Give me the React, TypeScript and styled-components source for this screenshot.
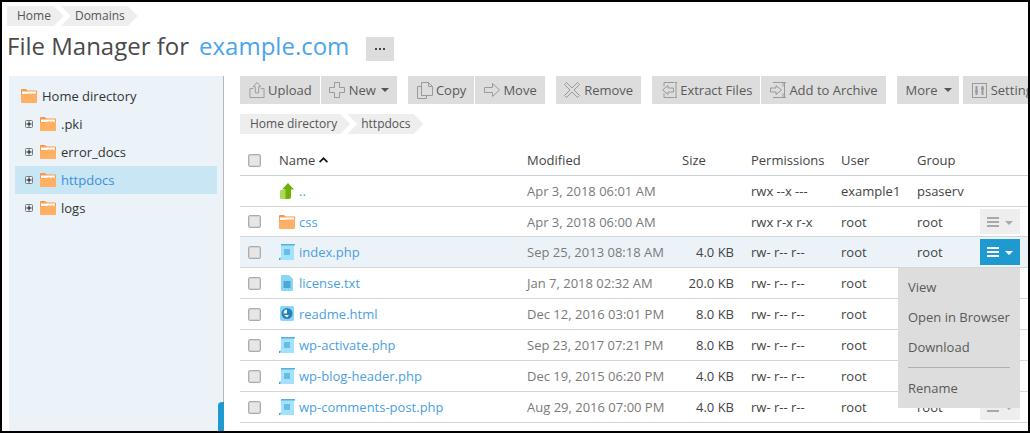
import React from "react";
import styled, { createGlobalStyle } from "styled-components";

const Global = createGlobalStyle`
  html, body { margin: 0; padding: 0; background: #fff; }
  body { font-family: "Open Sans", "Liberation Sans", sans-serif; font-size: 13px; color: #444; }
`;

const Page = styled.div`
  box-sizing: border-box;
  width: 1030px;
  height: 433px;
  border: 2px solid #000;
  background: #fff;
  overflow: hidden;
  display: flex;
  flex-direction: column;
`;

const Header = styled.header`
  padding: 4px 0 0 5px;
`;

const Crumbs = styled.nav`
  display: flex;
  height: 20px;
  font-size: 12px;
  line-height: 20px;
  color: #555;
`;

const Crumb = styled.span`
  padding: 0 13px 0 10px;
  background: #eee;
  clip-path: polygon(0 0, calc(100% - 10px) 0, 100% 50%, calc(100% - 10px) 100%, 0 100%);
  & + & {
    margin-left: -3px;
    padding-left: 14px;
    clip-path: polygon(0 0, calc(100% - 10px) 0, 100% 50%, calc(100% - 10px) 100%, 0 100%, 10px 50%);
  }
`;

const TitleRow = styled.div`
  display: flex;
  align-items: flex-start;
  height: 24px;
  margin-top: 11px;
`;

const Title = styled.h1`
  margin: 0;
  font-size: 24px;
  font-weight: 400;
  line-height: 18px;
  color: #4a4a4a;
`;

const Domain = styled.a`
  margin-left: 10px;
  font-size: 24px;
  line-height: 18px;
  color: #4ba5ea;
`;

const DotsButton = styled.button`
  width: 28px;
  height: 24px;
  margin-left: 17px;
  padding: 0;
  border: 0;
  background: #ddd;
  display: flex;
  align-items: center;
  justify-content: center;
`;

const Body = styled.div`
  flex: 1;
  min-height: 0;
  display: flex;
  margin: 15px 0 0 7px;
`;

const Sidebar = styled.aside`
  position: relative;
  box-sizing: border-box;
  width: 215px;
  flex: none;
  padding: 6px;
  background: #ebf3f9;
  border-right: 1px solid #b4b8bb;
`;

const SideHandle = styled.div`
  position: absolute;
  right: -1px;
  bottom: 0;
  width: 6px;
  height: 29px;
  background: #1f9ad0;
  border-top-left-radius: 4px;
`;

const TreeRoot = styled.div`
  display: flex;
  align-items: center;
  gap: 5px;
  height: 28px;
  padding-left: 6px;
  color: #333;
`;

const TreeRow = styled.div<{ $active?: boolean }>`
  display: flex;
  align-items: center;
  height: 28px;
  padding-left: 10px;
  background: ${(p) => (p.$active ? "#c8e6f4" : "transparent")};
  color: ${(p) => (p.$active ? "#3f8fd8" : "#333")};
`;

const TreeLabel = styled.span`
  margin-left: 5px;
`;

const Main = styled.main`
  flex: 1;
  min-width: 0;
  padding-left: 16px;
  overflow: hidden;
`;

const Toolbar = styled.div`
  display: flex;
  height: 28px;
  white-space: nowrap;
`;

const ToolGroup = styled.div`
  display: flex;
  flex: none;
  gap: 1px;
  margin-right: 11px;
  &:nth-last-child(2) { margin-right: 4px; }
`;

const ToolButton = styled.button`
  display: flex;
  align-items: center;
  gap: 3px;
  height: 28px;
  padding: 0 8px;
  border: 0;
  background: #ddd;
  font: inherit;
  color: #5a5a5a;
`;

const TextToolButton = styled(ToolButton)`
  padding: 0 7px 0 9px;
`;

const IconSlot = styled.span<{ $wide?: boolean }>`
  display: flex;
  flex: none;
  align-items: center;
  justify-content: center;
  width: ${(p) => (p.$wide ? 17.5 : 17)}px;
`;

const Caret = styled.i<{ $tight?: boolean }>`
  width: 0;
  height: 0;
  margin-left: ${(p) => (p.$tight ? 2 : 3)}px;
  border: 4px solid transparent;
  border-top-color: #555;
  border-bottom: 0;
`;

const PathCrumbs = styled(Crumbs)`
  margin-top: 10px;
`;

const columns = "39px 248px 155px 69px 90px 76px 63px 40px 1fr";

const HeadRow = styled.div`
  display: grid;
  grid-template-columns: ${columns};
  align-items: center;
  box-sizing: border-box;
  height: 31px;
  margin-top: 11px;
  border-bottom: 1px solid #c9d0d6;
  color: #444;
`;

const Row = styled.div<{ $short?: boolean; $active?: boolean }>`
  display: grid;
  grid-template-columns: ${columns};
  align-items: center;
  box-sizing: border-box;
  height: ${(p) => (p.$short ? 30 : 31)}px;
  border-bottom: 1px solid #d6d6d6;
  background: ${(p) => (p.$active ? "#ebf3f9" : "#fff")};
`;

const Check = styled.input.attrs({ type: "checkbox" })`
  appearance: none;
  box-sizing: border-box;
  display: block;
  width: 13px;
  height: 13px;
  margin: 0 0 0 8px;
  background: #e6e6e6;
  border: 1px solid #adadad;
  border-radius: 2px;
  box-shadow: inset 0 0 0 1px #d2d2d2;
`;

const SortName = styled.div`
  display: flex;
  align-items: center;
  gap: 4px;
`;

const NameCell = styled.div`
  display: flex;
  align-items: center;
  gap: 4px;
  color: #4b9fe2;
`;

const DateCell = styled.div`
  color: #7a7a7a;
`;

const SizeCell = styled.div`
  padding-right: 17px;
  text-align: right;
`;

const TextCell = styled.div`
  color: #444;
  white-space: nowrap;
`;

const ActionCell = styled.div`
  position: relative;
  align-self: stretch;
  display: flex;
`;

const ActionButton = styled.button<{ $active?: boolean }>`
  flex: 1;
  margin: 2px 0;
  padding: 0;
  border: 0;
  background: ${(p) => (p.$active ? "#1f9ad0" : "#eee")};
  display: flex;
  align-items: center;
  justify-content: center;
`;

const Menu = styled.div`
  position: absolute;
  z-index: 2;
  top: 31px;
  right: 0;
  box-sizing: border-box;
  width: 122px;
  padding: 4px 0 5px;
  background: #ddd;
  color: #5a5a5a;
`;

const MenuItem = styled.div`
  height: 30px;
  padding-left: 10px;
  line-height: 30px;
  white-space: nowrap;
`;

const MenuSep = styled.div`
  height: 1px;
  margin: 5px 10px;
  background: #b0b0b0;
`;

const Folder = () => (
  <svg width="16" height="14" viewBox="0 0 16 14" style={{ flex: "none" }}>
    <path d="M0 1a1 1 0 0 1 1-1h4l1.5 1.500H15a1 1 0 0 1 1 1V6H0z" fill="#f9984c" />
    <rect x="1" y="2.500" width="14" height="2.500" fill="#fff" />
    <path d="M0 5.500h5.500L7 4.500h9V13a1 1 0 0 1-1 1H1a1 1 0 0 1-1-1z" fill="#ffb063" />
  </svg>
);

const Expander = () => (
  <svg width="8" height="8" viewBox="0 0 8 8" style={{ flex: "none", marginRight: 7 }}>
    <rect x="0.5" y="0.5" width="7" height="7" rx="1" fill="#e9eef1" stroke="#6f7c86" />
    <path d="M1.500 4h5M4 1.500v5" stroke="#111" />
  </svg>
);

const G = "#9a9a9a";
const UploadIcon = () => (
  <svg width="16" height="18" viewBox="0 0 17 18" fill="none" stroke={G} strokeLinejoin="round">
    <path d="M4.500 7.500H1v9.500h15V7.500h-3.500" />
    <path d="M8.500 1 4.500 5.500h2.200V12h3.600V5.500h2.200z" />
  </svg>
);
const PlusIcon = () => (
  <svg width="16" height="16" viewBox="0 0 16 16" fill="none" stroke={G}>
    <path d="M5.500.5h5v5h5v5h-5v5h-5v-5h-5v-5h5z" />
  </svg>
);
const CopyIcon = () => (
  <svg width="17" height="17" viewBox="0 0 17 17" fill="none" stroke={G}>
    <path d="M5.500 4.500h-4v12h9v-3" />
    <path d="M5.500.5h7l4 4v9h-11z" />
    <path d="M12.500.5v4h4" />
  </svg>
);
const MoveIcon = () => (
  <svg width="16" height="14" viewBox="0 0 16 14" fill="none" stroke={G}>
    <path d="M.5 4.500h8v-4l7 6.500-7 6.500v-4h-8z" />
  </svg>
);
const RemoveIcon = () => (
  <svg width="16" height="16" viewBox="0 0 16 16" fill="none" stroke={G}>
    <path d="M2.500.5 8 6l5.500-5.500 2 2L10 8l5.500 5.500-2 2L8 10l-5.500 5.500-2-2L6 8 .5 2.500z" />
  </svg>
);
const ExtractIcon = () => (
  <svg width="16" height="16" viewBox="0 0 16 16" fill="none" stroke={G}>
    <path d="M13 .5H3v4M13 15.500H3v-4" />
    <path d="M15 .5v15M13.500.5h3M13.500 15.500h3" />
    <path d="M12.500 6H7V3.500L1.500 8 7 12.500V10h5.500z" />
  </svg>
);
const ArchiveIcon = () => (
  <svg width="16" height="16" viewBox="0 0 16 16" fill="none" stroke={G}>
    <path d="M3 .5h10v4M3 15.500h10v-4" />
    <path d="M14.500.5v15M13 .5h3M13 15.500h3" />
    <path d="M.5 6H6V3.500L11.500 8 6 12.500V10H.5z" />
  </svg>
);
const SettingsIcon = () => (
  <svg width="15" height="15" viewBox="0 0 15 15" fill="none" stroke={G}>
    <rect x="0.5" y="0.5" width="14" height="14" />
    <path d="M4.500 3v9M10.500 3v9M3 8.500h3M9 5.500h3" strokeWidth="2" />
  </svg>
);

const SortArrow = () => (
  <svg width="9" height="6" viewBox="0 0 9 6">
    <path d="M4.500 0 9 4.500 7.800 5.700 4.500 2.500 1.200 5.700 0 4.500z" fill="#111" />
  </svg>
);

const UpIcon = () => (
  <svg width="16" height="16" viewBox="0 0 16 16" style={{ flex: "none" }}>
    <rect x="1" y="7" width="9" height="9" rx="1" fill="#a9d85f" />
    <path d="M9 0 15 6.500h-3V14a2 2 0 0 1-2 2H6.500V6.500H3z" fill="#6db200" />
  </svg>
);

const PhpIcon = () => (
  <svg width="16" height="16" viewBox="0 0 16 16" style={{ flex: "none" }}>
    <path d="M2 1h13v15H2v-1H0v-1l2-1z" fill="#a2e2fc" />
    <rect x="2" y="0" width="14" height="1.500" fill="#5ab0d8" />
    <path d="M0 14h1.500v2H0z" fill="#4a9fcb" />
    <rect x="5" y="5" width="6" height="6" fill="#69bde2" />
  </svg>
);

const TxtIcon = () => (
  <svg width="16" height="16" viewBox="0 0 16 16" style={{ flex: "none" }}>
    <path d="M2 1a1 1 0 0 1 1-1h7l4 4v11a1 1 0 0 1-1 1H3a1 1 0 0 1-1-1z" fill="#8ad6f7" />
    <rect x="4.500" y="6" width="7" height="7" fill="#4fa6d1" />
  </svg>
);

const HtmlIcon = () => (
  <svg width="16" height="16" viewBox="0 0 16 16" style={{ flex: "none" }}>
    <rect x="1" y="0" width="14" height="15" rx="2" fill="#8ad6f7" />
    <circle cx="8" cy="7.500" r="5.500" fill="#2a80b4" />
    <path d="M8 3.500v4H4.500a3.500 4 0 0 1 3.500-4zM5 9h5l-2 2.500z" fill="#e4f5fd" />
  </svg>
);

const MenuGlyph = ({ light }: { light?: boolean }) => {
  const c = light ? "#fff" : "#a8a8a8";
  return (
    <svg width="26" height="10" viewBox="0 0 26 10">
      <path d="M0 0h12v2H0zM0 4h12v2H0zM0 8h12v2H0z" fill={c} />
      <path d="M18 4h8l-4 4z" fill={c} />
    </svg>
  );
};

type FileRow = {
  name: string;
  icon: React.ReactNode;
  date: string;
  size: string;
  perm: string;
  user: string;
  group: string;
  short?: boolean;
};

const files: FileRow[] = [
  { name: "css", icon: <Folder />, date: "Apr 3, 2018 06:00 AM", size: "", perm: "rwx r-x r-x", user: "root", group: "root", short: true },
  { name: "index.php", icon: <PhpIcon />, date: "Sep 25, 2013 08:18 AM", size: "4.0 KB", perm: "rw- r-- r--", user: "root", group: "root" },
  { name: "license.txt", icon: <TxtIcon />, date: "Jan 7, 2018 02:32 AM", size: "20.0 KB", perm: "rw- r-- r--", user: "root", group: "root" },
  { name: "readme.html", icon: <HtmlIcon />, date: "Dec 12, 2016 03:01 PM", size: "8.0 KB", perm: "rw- r-- r--", user: "root", group: "root" },
  { name: "wp-activate.php", icon: <PhpIcon />, date: "Sep 23, 2017 07:21 PM", size: "8.0 KB", perm: "rw- r-- r--", user: "root", group: "root" },
  { name: "wp-blog-header.php", icon: <PhpIcon />, date: "Dec 19, 2015 06:20 PM", size: "4.0 KB", perm: "rw- r-- r--", user: "root", group: "root" },
  { name: "wp-comments-post.php", icon: <PhpIcon />, date: "Aug 29, 2016 07:00 PM", size: "4.0 KB", perm: "rw- r-- r--", user: "root", group: "root" },
];

const tree = [".pki", "error_docs", "httpdocs", "logs"];

export default function App() {
  return (
    <Page>
      <Global />
      <Header>
        <Crumbs>
          <Crumb>Home</Crumb>
          <Crumb>Domains</Crumb>
        </Crumbs>
        <TitleRow>
          <Title>File Manager for</Title>
          <Domain>example.com</Domain>
          <DotsButton aria-label="More">
            <svg width="10" height="2" viewBox="0 0 10 2">
              <path d="M0 0h2v2H0zM4 0h2v2H4zM8 0h2v2H8z" fill="#444" />
            </svg>
          </DotsButton>
        </TitleRow>
      </Header>
      <Body>
        <Sidebar>
          <TreeRoot>
            <Folder />
            Home directory
          </TreeRoot>
          {tree.map((t) => (
            <TreeRow key={t} $active={t === "httpdocs"}>
              <Expander />
              <Folder />
              <TreeLabel>{t}</TreeLabel>
            </TreeRow>
          ))}
          <SideHandle />
        </Sidebar>
        <Main>
          <Toolbar>
            <ToolGroup>
              <ToolButton><IconSlot><UploadIcon /></IconSlot>Upload</ToolButton>
              <ToolButton><IconSlot><PlusIcon /></IconSlot>New<Caret $tight /></ToolButton>
            </ToolGroup>
            <ToolGroup>
              <ToolButton><IconSlot><CopyIcon /></IconSlot>Copy</ToolButton>
              <ToolButton><IconSlot><MoveIcon /></IconSlot>Move</ToolButton>
            </ToolGroup>
            <ToolGroup>
              <ToolButton><IconSlot $wide><RemoveIcon /></IconSlot>Remove</ToolButton>
            </ToolGroup>
            <ToolGroup>
              <ToolButton><IconSlot><ExtractIcon /></IconSlot>Extract Files</ToolButton>
              <ToolButton><IconSlot><ArchiveIcon /></IconSlot>Add to Archive</ToolButton>
            </ToolGroup>
            <ToolGroup>
              <TextToolButton>More<Caret /></TextToolButton>
            </ToolGroup>
            <ToolGroup>
              <ToolButton><IconSlot><SettingsIcon /></IconSlot>Settings</ToolButton>
            </ToolGroup>
          </Toolbar>
          <PathCrumbs>
            <Crumb>Home directory</Crumb>
            <Crumb>httpdocs</Crumb>
          </PathCrumbs>
          <HeadRow>
            <Check />
            <SortName>Name <SortArrow /></SortName>
            <div>Modified</div>
            <div>Size</div>
            <div>Permissions</div>
            <div>User</div>
            <div>Group</div>
          </HeadRow>
          <Row>
            <span />
            <NameCell><UpIcon />..</NameCell>
            <DateCell>Apr 3, 2018 06:01 AM</DateCell>
            <SizeCell />
            <TextCell>rwx --x ---</TextCell>
            <TextCell>example1</TextCell>
            <TextCell>psaserv</TextCell>
          </Row>
          {files.map((f) => {
            const open = f.name === "index.php";
            return (
              <Row key={f.name} $short={f.short} $active={open}>
                <Check />
                <NameCell>{f.icon}{f.name}</NameCell>
                <DateCell>{f.date}</DateCell>
                <SizeCell>{f.size}</SizeCell>
                <TextCell>{f.perm}</TextCell>
                <TextCell>{f.user}</TextCell>
                <TextCell>{f.group}</TextCell>
                <ActionCell>
                  <ActionButton $active={open} aria-label="Actions">
                    <MenuGlyph light={open} />
                  </ActionButton>
                  {open && (
                    <Menu>
                      <MenuItem>View</MenuItem>
                      <MenuItem>Open in Browser</MenuItem>
                      <MenuItem>Download</MenuItem>
                      <MenuSep />
                      <MenuItem>Rename</MenuItem>
                    </Menu>
                  )}
                </ActionCell>
              </Row>
            );
          })}
        </Main>
      </Body>
    </Page>
  );
}
